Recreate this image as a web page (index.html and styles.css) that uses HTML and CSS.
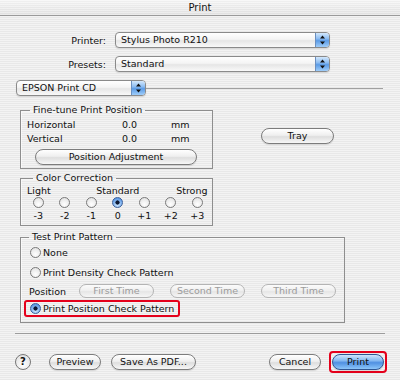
FILE: index.html
```html
<!DOCTYPE html>
<html lang="en">
<head>
    <meta charset="UTF-8">
    <title>Print</title>
    <link rel="stylesheet" href="styles.css">
</head>
<body>
    <div class="titlebar">Print</div>

    <div class="dialog">
        <div class="field-row">
            <span class="field-label">Printer:</span>
            <div class="popup popup-wide">
                <span class="popup-text">Stylus Photo R210</span>
                <span class="popup-arrows">
                    <svg width="7" height="10" viewBox="0 0 7 10"><path d="M3.5 0.5 L6 3.5 H1 Z M1 6.5 H6 L3.5 9.5 Z" fill="#111"/></svg>
                </span>
            </div>
        </div>

        <div class="field-row">
            <span class="field-label">Presets:</span>
            <div class="popup popup-wide">
                <span class="popup-text">Standard</span>
                <span class="popup-arrows">
                    <svg width="7" height="10" viewBox="0 0 7 10"><path d="M3.5 0.5 L6 3.5 H1 Z M1 6.5 H6 L3.5 9.5 Z" fill="#111"/></svg>
                </span>
            </div>
        </div>

        <div class="pane-row">
            <div class="popup popup-pane">
                <span class="popup-text">EPSON Print CD</span>
                <span class="popup-arrows">
                    <svg width="7" height="10" viewBox="0 0 7 10"><path d="M3.5 0.5 L6 3.5 H1 Z M1 6.5 H6 L3.5 9.5 Z" fill="#111"/></svg>
                </span>
            </div>
            <div class="pane-line"></div>
        </div>

        <div class="tune-row">
            <fieldset class="group tune-group">
                <legend>Fine-tune Print Position</legend>
                <div class="tune-grid">
                    <span>Horizontal</span><span>0.0</span><span>mm</span>
                    <span>Vertical</span><span>0.0</span><span>mm</span>
                </div>
                <div class="btn btn-adjust">Position Adjustment</div>
            </fieldset>

            <div class="btn btn-tray">Tray</div>
        </div>

        <fieldset class="group color-group">
            <legend>Color Correction</legend>
            <div class="color-grid">
                <span class="color-light">Light</span>
                <span class="color-standard">Standard</span>
                <span class="color-strong">Strong</span>

                <span class="radio"></span>
                <span class="radio"></span>
                <span class="radio"></span>
                <span class="radio checked"></span>
                <span class="radio"></span>
                <span class="radio"></span>
                <span class="radio"></span>

                <span>-3</span>
                <span>-2</span>
                <span>-1</span>
                <span>0</span>
                <span>+1</span>
                <span>+2</span>
                <span>+3</span>
            </div>
        </fieldset>

        <fieldset class="group test-group">
            <legend>Test Print Pattern</legend>

            <div class="option option-none">
                <span class="radio"></span>
                <span>None</span>
            </div>

            <div class="option option-density">
                <span class="radio"></span>
                <span>Print Density Check Pattern</span>
            </div>

            <div class="position-row">
                <span class="position-label">Position</span>
                <div class="btn btn-time disabled">First Time</div>
                <div class="btn btn-time disabled">Second Time</div>
                <div class="btn btn-time disabled">Third Time</div>
            </div>

            <div class="option option-marked">
                <span class="radio checked"></span>
                <span>Print Position Check Pattern</span>
            </div>
        </fieldset>

        <div class="separator"></div>

        <div class="actions">
            <div class="help">?</div>
            <div class="btn btn-preview">Preview</div>
            <div class="btn btn-pdf">Save As PDF...</div>
            <div class="btn btn-cancel">Cancel</div>
            <div class="marked-button">
                <div class="btn btn-print">Print</div>
            </div>
        </div>
    </div>
</body>
</html>
```

FILE: styles.css
```css
* {
    box-sizing: border-box;
}

body {
    margin: 0;
    width: 400px;
    height: 380px;
    overflow: hidden;

    font-family: "DejaVu Sans", Verdana, sans-serif;
    font-size: 9.5px;
    color: #111;

    background: repeating-linear-gradient(to bottom, #f3f3f3 0, #f3f3f3 1px, #e8e8e8 1px, #e8e8e8 2px);
}

.titlebar {
    height: 16px;

    line-height: 15px;
    text-align: center;
    font-size: 10px;

    background:
        linear-gradient(rgba(255, 255, 255, 0.35), rgba(0, 0, 0, 0.04)),
        repeating-linear-gradient(to bottom, #f5f5f5 0, #f5f5f5 1px, #e9e9e9 1px, #e9e9e9 2px);
    border-bottom: 1px solid #9a9a9a;
}

.dialog {
    padding: 16px 15px 0 15px;
}

/* popups */

.field-row {
    display: flex;
    align-items: center;
    height: 16px;
    margin-bottom: 8px;
}

.field-label {
    width: 91px;
    text-align: right;
}

.popup {
    display: flex;
    align-items: stretch;
    height: 16px;
    overflow: hidden;

    background: linear-gradient(#ffffff, #f4f4f4 45%, #e6e6e6 55%, #f9f9f9);
    border: 1px solid #8a8a8a;
    border-radius: 4px;
    box-shadow: 0 1px 1px rgba(0, 0, 0, 0.12);
}

.popup-wide {
    width: 215px;
    margin-left: 9px;
}

.popup-text {
    flex-grow: 1;
    padding-left: 5px;
    line-height: 14px;
}

.popup-arrows {
    width: 14px;

    display: flex;
    align-items: center;
    justify-content: center;

    background: linear-gradient(#d3e8fc, #8dbdf2 40%, #5b9be6 55%, #9fcdf9);
    border-left: 1px solid #6a8fc0;
}

.pane-row {
    display: flex;
    align-items: center;
    margin-left: 1px;
}

.popup-pane {
    width: 130px;
}

.pane-line {
    flex-grow: 1;
    height: 1px;
    margin-right: 2px;

    background-color: #a0a0a0;
}

/* group boxes */

.group {
    margin: 0 0 0 5px;
    padding: 0 4px 3px 6px;
    min-width: 0;

    border: 1px solid #8e8e8e;
    box-shadow: inset 1px 1px 0 rgba(255, 255, 255, 0.6);
}

.group legend {
    margin-left: 3px;
    padding: 0 3px;
    line-height: 12px;
}

.tune-row {
    display: flex;
    align-items: flex-start;
    margin-top: 8px;
}

.tune-group {
    width: 193px;
}

.tune-grid {
    display: grid;
    grid-template-columns: 95px 49px auto;
    grid-auto-rows: 14px;
    align-items: center;
    padding-top: 1px;
}

.btn {
    height: 16px;

    line-height: 14px;
    text-align: center;
    white-space: nowrap;

    background: linear-gradient(#ffffff, #efefef 45%, #dedede 55%, #f7f7f7);
    border: 1px solid #7c7c7c;
    border-radius: 8px;
    box-shadow: 0 1px 1px rgba(0, 0, 0, 0.12);
}

.btn-adjust {
    width: 162px;
    margin: 4px 0 0 8px;
}

.btn-tray {
    width: 73px;
    margin: 24px 0 0 48px;
}

.color-group {
    width: 193px;
    margin-top: 3px;
    padding: 0 0 4px 4px;
}

.color-group legend {
    margin-left: 8px;
}

.color-grid {
    display: grid;
    grid-template-columns: repeat(7, 26.5px);
    grid-template-rows: 12px 13px 12px;
    align-items: center;
    justify-items: center;
}

.color-light {
    justify-self: start;
    margin-left: 2px;
}

.color-standard {
    grid-column: 3 / 6;
}

.color-strong {
    grid-column: 6 / 8;
    justify-self: end;
    margin-right: 3px;
}

.radio {
    flex: none;
    width: 11px;
    height: 11px;

    background: radial-gradient(circle at 50% 70%, #ffffff, #dedede);
    border: 1px solid #7a7a7a;
    border-radius: 50%;
}

.radio.checked {
    background:
        radial-gradient(circle, #0b1833 0, #0b1833 1.8px, transparent 2.4px),
        radial-gradient(circle at 50% 75%, #cfe8ff, #5d9ae6 75%);
    border-color: #3a5e98;
}

.test-group {
    width: 325px;
    margin-top: 5px;
    padding: 0 4px 5px 3px;
}

.test-group legend {
    margin-left: 5px;
}

.option {
    display: flex;
    align-items: center;
    gap: 2px;
    height: 14px;
    padding-left: 6px;
}

.option-none {
    margin-top: 2px;
}

.option-density {
    margin-top: 6px;
}

.position-row {
    display: flex;
    align-items: center;
    gap: 16px;
    height: 14px;
    margin-top: 5px;
    padding-left: 5px;
}

.position-label {
    width: 34px;
}

.btn-time {
    width: 75px;
    height: 14px;
    line-height: 12px;
}

.btn.disabled {
    color: #9c9c9c;
    background: linear-gradient(#fbfbfb, #f0f0f0 45%, #e6e6e6 55%, #f6f6f6);
    border-color: #b4b4b4;
    box-shadow: none;
}

.option-marked {
    width: 156px;
    height: 17px;
    margin-top: 2px;
    padding-left: 4px;

    border: 2px solid #e4001b;
    border-radius: 3px;
}

.separator {
    height: 1px;
    margin-top: 10px;

    background-color: #9c9c9c;
}

/* bottom buttons */

.actions {
    display: flex;
    align-items: center;
    margin-top: 17px;
}

.help {
    width: 16px;
    height: 16px;

    line-height: 14px;
    text-align: center;
    font-weight: bold;
    font-size: 10px;

    background: radial-gradient(circle at 50% 70%, #ffffff, #dcdcdc);
    border: 1px solid #777;
    border-radius: 50%;
}

.btn-preview {
    width: 52px;
    margin-left: 18px;
}

.btn-pdf {
    width: 85px;
    margin-left: 10px;
}

.btn-cancel {
    width: 52px;
    margin-left: auto;
}

.marked-button {
    margin: 0 -2px 0 8px;
    padding: 1px;

    border: 2px solid #e4001b;
    border-radius: 4px;
}

.btn-print {
    width: 52px;

    background: linear-gradient(#cfe6fd, #85b9f1 40%, #4f90e2 55%, #8cc6fa);
    border-color: #2f5592;
}
```
